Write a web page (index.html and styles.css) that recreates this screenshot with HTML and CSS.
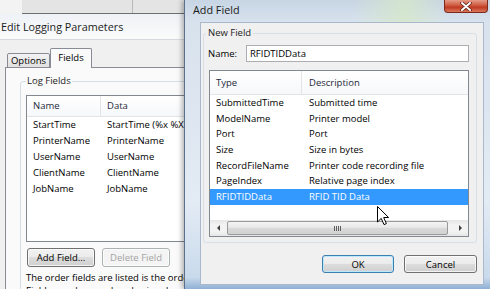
FILE: index.html
```html
<!DOCTYPE html>
<html lang="en">
<head>
    <meta charset="utf-8">
    <title>Add Field</title>
    <link rel="stylesheet" href="styles.css">
</head>
<body>

<div class="desk">

    <div class="back-bar"></div>

    <div id="edit-win">
        <div class="edit-title">Edit Logging Parameters</div>
        <div class="edit-client">
            <div class="tabs">
                <div class="tab tab-options">Options</div>
                <div class="tab tab-active">Fields</div>
            </div>
            <div class="tab-panel">
                <fieldset class="group group-log">
                    <legend>Log Fields</legend>
                    <div class="list list-log">
                        <div class="list-head">
                            <div class="col-a">Name</div>
                            <div class="col-b">Data</div>
                        </div>
                        <div class="row"><div class="col-a">StartTime</div><div class="col-b">StartTime (%x %X)</div></div>
                        <div class="row"><div class="col-a">PrinterName</div><div class="col-b">PrinterName</div></div>
                        <div class="row"><div class="col-a">UserName</div><div class="col-b">UserName</div></div>
                        <div class="row"><div class="col-a">ClientName</div><div class="col-b">ClientName</div></div>
                        <div class="row"><div class="col-a">JobName</div><div class="col-b">JobName</div></div>
                    </div>
                    <div class="log-buttons">
                        <button class="btn">Add Field...</button>
                        <button class="btn" disabled>Delete Field</button>
                    </div>
                    <p class="note">The order fields are listed is the order they appear in the log.<br>Fields may be reordered using drag and drop.</p>
                </fieldset>
            </div>
        </div>
    </div>

    <div id="add-dlg">
        <div class="dlg-title">
            <span>Add Field</span>
            <div class="close-btn">
                <svg width="12" height="9" viewBox="0 0 12 9">
                    <path d="M2 1 L10 8 M10 1 L2 8" stroke="#5a1a10" stroke-width="3.4" stroke-linecap="round"/>
                    <path d="M2 1 L10 8 M10 1 L2 8" stroke="#ffffff" stroke-width="2" stroke-linecap="round"/>
                </svg>
            </div>
        </div>
        <div class="dlg-client">
            <fieldset class="group group-new">
                <legend>New Field</legend>
                <div class="name-row">
                    <label>Name:</label>
                    <div class="textbox">RFIDTIDData</div>
                </div>
                <div class="list list-type">
                    <div class="list-head">
                        <div class="col-a">Type</div>
                        <div class="col-b">Description</div>
                    </div>
                    <div class="row"><div class="col-a">SubmittedTime</div><div class="col-b">Submitted time</div></div>
                    <div class="row"><div class="col-a">ModelName</div><div class="col-b">Printer model</div></div>
                    <div class="row"><div class="col-a">Port</div><div class="col-b">Port</div></div>
                    <div class="row"><div class="col-a">Size</div><div class="col-b">Size in bytes</div></div>
                    <div class="row"><div class="col-a">RecordFileName</div><div class="col-b">Printer code recording file</div></div>
                    <div class="row"><div class="col-a">PageIndex</div><div class="col-b">Relative page index</div></div>
                    <div class="row row-selected"><div class="col-a">RFIDTIDData</div><div class="col-b">RFID TID Data</div></div>
                    <div class="list-space"></div>
                    <div class="hscroll">
                        <div class="scroll-arrow"><span class="tri-left"></span></div>
                        <div class="scroll-thumb"><span class="grip"></span></div>
                        <div class="scroll-track"></div>
                        <div class="scroll-arrow"><span class="tri-right"></span></div>
                    </div>
                </div>
            </fieldset>
            <div class="dlg-buttons">
                <button class="btn btn-default">OK</button>
                <button class="btn">Cancel</button>
            </div>
        </div>
    </div>

    <svg class="cursor" width="13" height="20" viewBox="0 0 13 20">
        <path d="M0.5 0.5 L0.5 16 L4.2 12.4 L7 18.6 L9.4 17.6 L6.7 11.5 L11.6 11.5 Z" fill="#ffffff" stroke="#000000" stroke-width="1"/>
    </svg>

</div>

</body>
</html>
```

FILE: styles.css
```css
* {
    margin: 0;
    padding: 0;
    box-sizing: border-box;
}

body {
    font-family: "Open Sans", "Noto Sans", sans-serif;
    font-size: 9.5px;
    color: #000000;
    background-color: #f3f3f3;
}

.desk {
    position: relative;
    width: 490px;
    height: 289px;
    overflow: hidden;
}

.back-bar {
    position: absolute;
    left: 22px;
    top: 0;
    width: 163px;
    height: 14px;
    background: linear-gradient(to right, #e4e4e4 110px, #b9b9b9 110px, #b9b9b9 111px, #e4e4e4 111px);
    border-bottom: 1px solid #6e6e6e;
}

/* Edit Logging Parameters */

#edit-win {
    position: absolute;
    left: 0;
    top: 14px;
    width: 260px;
    height: 275px;
    background-color: #f0f0f0;
    overflow: hidden;
}

.edit-title {
    height: 26px;
    padding-left: 1px;
    line-height: 26px;
    font-size: 10.8px;
    color: #1c1c1c;
    background: linear-gradient(#eef2f6, #fbfbfb);
    border-bottom: 1px solid #d6d9dd;
}

.edit-client {
    padding: 8px 0 0 5px;
}

.tabs {
    display: flex;
    align-items: flex-end;
    height: 20px;
    padding-left: 2px;
    margin-bottom: -1px;
    position: relative;
    z-index: 1;
}

.tab {
    height: 15px;
    line-height: 13px;
    text-align: center;
    border: 1px solid #898c95;
    border-radius: 2px 2px 0 0;
    background: linear-gradient(#f3f3f3, #e0e0e0);
}

.tab-options {
    width: 43px;
}

.tab-active {
    width: 42px;
    height: 20px;
    line-height: 18px;
    border-bottom: none;
    background: #fafafa;
}

.tab-panel {
    height: 240px;
    border: 1px solid #898c95;
    border-right: none;
    background-color: #fafafa;
}

.group {
    border: 1px solid #d5dfe5;
    border-radius: 3px;
}

.group legend {
    line-height: 14px;
    padding: 0 1px;
    color: #1c1c1c;
}

.group-log {
    width: 230px;
    margin: 6px 0 0 14px;
    padding: 7px 0 20px 5px;
}

.list {
    border: 1px solid #828790;
    background-color: #ffffff;
}

.list-head {
    display: flex;
    background: linear-gradient(#ffffff, #f7f8fa);
    border-bottom: 1px solid #e2e4e7;
    color: #1e2a3a;
}

.list-head .col-a {
    border-right: 1px solid #e2e4e7;
}

.row {
    display: flex;
}

.col-a,
.col-b {
    white-space: nowrap;
    overflow: hidden;
}

.col-b {
    flex: 1;
}

.list-log {
    height: 147px;
}

.list-log .list-head {
    height: 21px;
    line-height: 20px;
}

.list-log .col-a {
    width: 74px;
    padding-left: 6px;
}

.list-log .col-b {
    padding-left: 6px;
}

.list-log .row {
    height: 16px;
    line-height: 16px;
}

.log-buttons {
    display: flex;
    gap: 7px;
    margin: 6px 0 0 1px;
}

.log-buttons .btn {
    width: 68px;
    height: 19px;
}

.note {
    margin-top: 4px;
    line-height: 13px;
    white-space: nowrap;
}

/* buttons */

.btn {
    font-family: "Open Sans", "Noto Sans", sans-serif;
    font-size: 9.5px;
    color: #000000;
    border: 1px solid #707070;
    border-radius: 3px;
    background: linear-gradient(#f2f2f2 0%, #ebebeb 50%, #dddddd 50%, #cfcfcf 100%);
    box-shadow: inset 0 0 0 1px rgba(255, 255, 255, 0.75);
}

.btn:disabled {
    color: #a3a3a3;
    border-color: #adb2b5;
    background: #f4f4f4;
}

.btn-default {
    border-color: #3c7fb1;
    box-shadow: inset 0 0 0 1px #bfe7fb;
}

/* Add Field dialog */

#add-dlg {
    position: absolute;
    left: 184px;
    top: 0;
    width: 306px;
    height: 289px;
    border-left: 1px solid #5d7089;
    background: linear-gradient(to right, rgba(255, 255, 255, 0) 55%, rgba(214, 232, 200, 0.8) 72%, rgba(255, 255, 255, 0) 86%) no-repeat 0 0 / 100% 22px,
                linear-gradient(#c7d5e4 0, #d8e2ed 22px, #e3ebf4 70%, #c9daec 96%, #8fb0d4 100%);
    box-shadow: -2px 0 5px rgba(0, 0, 0, 0.3);
}

.dlg-title {
    display: flex;
    justify-content: space-between;
    height: 22px;
    padding-left: 8px;
    line-height: 20px;
    font-size: 10.8px;
    color: #1a1a1a;
}

.close-btn {
    display: flex;
    align-items: center;
    justify-content: center;
    width: 44px;
    height: 13px;
    margin-right: 2px;
    border: 1px solid #7d2a1c;
    border-top: none;
    border-radius: 0 0 4px 4px;
    background: linear-gradient(#e49a88, #cf5a40 45%, #c03a22 60%, #d9785a);
}

.dlg-client {
    display: flex;
    flex-direction: column;
    height: 263px;
    margin: 0 6px 0 15px;
    border: 1px solid #a9b8ca;
    background-color: #f0f0f0;
}

.group-new {
    margin: 3px 6px 0 2px;
    padding: 0 7px 5px 4px;
}

.group-new legend {
    margin-left: -2px;
    padding: 0 2px;
}

.name-row {
    display: flex;
    align-items: center;
    padding-top: 5px;
}

.name-row label {
    width: 38px;
}

.textbox {
    flex: 1;
    height: 17px;
    padding-left: 3px;
    line-height: 15px;
    border: 1px solid #abadb3;
    background-color: #ffffff;
}

.list-type {
    display: flex;
    flex-direction: column;
    height: 167px;
    margin: 8px 0 0 1px;
}

.list-type .list-head {
    height: 24px;
    line-height: 24px;
}

.list-type .col-a {
    width: 92px;
    padding-left: 6px;
}

.list-type .col-b {
    padding-left: 7px;
}

.list-type .row {
    height: 15.7px;
    line-height: 15.7px;
}

.row-selected {
    color: #ffffff;
    background-color: #3399ff;
}

.list-space {
    flex: 1;
}

.hscroll {
    display: flex;
    height: 16px;
    background: linear-gradient(#e6e6e6, #f3f3f3 30%, #f3f3f3 70%, #e6e6e6);
}

.scroll-arrow {
    display: flex;
    align-items: center;
    justify-content: center;
    width: 16px;
}

.tri-left {
    border-top: 3px solid transparent;
    border-bottom: 3px solid transparent;
    border-right: 3px solid #404040;
}

.tri-right {
    border-top: 3px solid transparent;
    border-bottom: 3px solid transparent;
    border-left: 3px solid #404040;
}

.scroll-thumb {
    display: flex;
    align-items: center;
    justify-content: center;
    width: 221px;
    margin: 1px 0 1px 1px;
    border: 1px solid #9a9a9a;
    border-radius: 2px;
    background: linear-gradient(#f4f4f4, #e6e6e6 50%, #d9d9d9 50%, #d2d2d2);
}

.grip {
    width: 7px;
    height: 5px;
    background: repeating-linear-gradient(to right, #5e5e5e 0, #5e5e5e 1px, transparent 1px, transparent 2px);
}

.scroll-track {
    flex: 1;
}

.dlg-buttons {
    display: flex;
    justify-content: flex-end;
    gap: 10px;
    margin-top: 12px;
    padding-right: 6px;
}

.dlg-buttons .btn {
    height: 18px;
}

.btn-default {
    width: 72px;
}

.dlg-buttons .btn + .btn {
    width: 73px;
}

.cursor {
    position: absolute;
    left: 377px;
    top: 206px;
}
```
